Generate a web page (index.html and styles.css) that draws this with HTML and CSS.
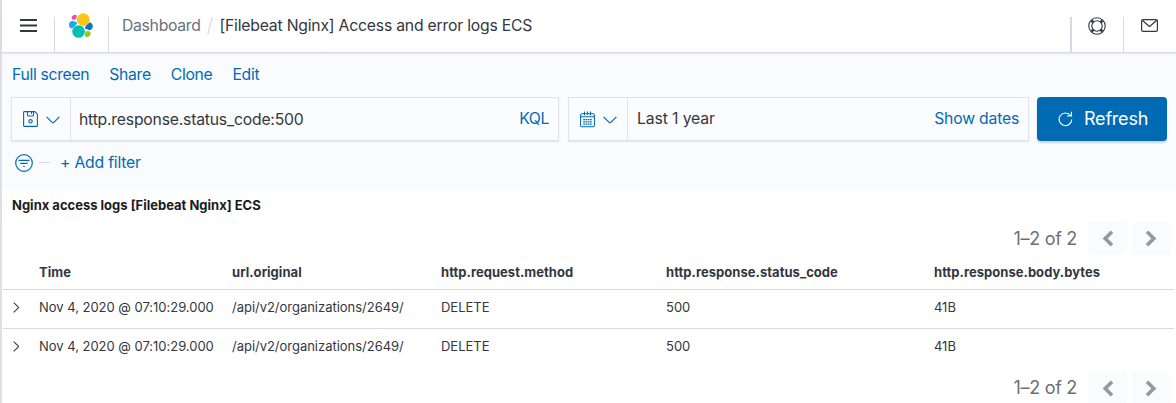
FILE: index.html
```html
<!DOCTYPE html>
<html lang="en">
<head>
<meta charset="utf-8">
<title>Dashboard</title>
<link rel="stylesheet" href="styles.css">
</head>
<body>
<div class="app">
  <header class="header">
    <button class="header-menu" aria-label="Menu"><svg width="17" height="13" viewBox="0 0 17 13"><path d="M0 1h17M0 6.500h17M0 12h17" stroke="#343741" stroke-width="2"/></svg></button>
    <a class="header-logo"><svg width="24" height="25" viewBox="0 0 32 33">
      <circle cx="19" cy="8.500" r="8.500" fill="#fec514"/>
      <circle cx="12.700" cy="24.500" r="8.400" fill="#00bfb3"/>
      <path d="M8 2.200a3.600 3.600 0 0 1 2.400 1L9.300 8.600 4.200 8.600A4.300 4.300 0 0 1 8 2.200z" fill="#f04e98"/>
      <path d="M4.500 10 11.200 12.600 9.500 15.600 3.900 20.900A5.600 5.600 0 0 1 4.500 10z" fill="#1ba9f5"/>
      <path d="M27.700 12a5.600 5.600 0 0 1-.5 10.800L20.800 20.300 22.600 16.800z" fill="#0077cc"/>
      <path d="M22 24 27.500 24.200A4.300 4.300 0 0 1 20.900 30.300z" fill="#93c90e"/>
    </svg></a>
    <nav class="breadcrumbs"><span class="crumb">Dashboard</span><svg class="slash" width="6" height="18" viewBox="0 0 6 18"><path d="M5.300 .5.700 17.500" stroke="#d3dae6" stroke-width="1.200"/></svg><span class="crumb-current">[Filebeat Nginx] Access and error logs ECS</span></nav>
    <button class="header-help" aria-label="Help"><svg width="18" height="18" viewBox="0 0 18 18" fill="none" stroke="#343741" stroke-width="1.100"><circle cx="9" cy="9" r="8.200"/><circle cx="9" cy="9" r="5.200"/><path d="M3.500 3.500 5.400 5.400M14.500 3.500 12.600 5.400M3.500 14.500 5.400 12.600M14.500 14.500 12.600 12.600" stroke-width="2.600"/></svg></button>
    <button class="header-mail" aria-label="Newsfeed"><svg width="17" height="13" viewBox="0 0 17 13" fill="none" stroke="#343741" stroke-width="1.200"><rect x=".6" y=".6" width="15.800" height="11.800" rx="1.400"/><path d="M1.200 1.200 7.800 7a1 1 0 0 0 1.400 0L15.800 1.200"/></svg></button>
  </header>
  <section class="controls">
    <nav class="menu"><a>Full screen</a><a>Share</a><a>Clone</a><a>Edit</a></nav>
    <div class="query-row">
      <div class="box query">
        <div class="box-prepend">
          <svg width="15" height="16" viewBox="0 0 15 16" fill="none" stroke="#006bb4" stroke-width="1.100"><path d="M1.200.6H11.800L14.400 3.200V14.400q0 1-1 1H1.600q-1 0-1-1V1.600q0-1 .6-1zM4.500.6V4q0 1 1 1h4q1 0 1-1V.6M8.500 1v2"/><circle cx="7.500" cy="10.300" r="1.700"/></svg>
          <svg class="caret" width="14" height="8" viewBox="0 0 14 8" fill="none" stroke="#006bb4" stroke-width="1.200"><path d="M.6.800 6.400 6.600q.6.500 1.200 0L13.400.8"/></svg>
        </div>
        <span class="query-text">http.response.status_code:500</span>
        <a class="kql">KQL</a>
      </div>
      <div class="box dates">
        <div class="box-prepend">
          <svg width="15" height="17" viewBox="0 0 16 17" fill="none" stroke="#006bb4" stroke-width="1.100"><rect x=".6" y="2.300" width="14.800" height="14" rx="1.800"/><path d="M.6 5.500h14.800M4.800 0v4M11.200 0v4M8 0v3.500"/><path d="M3.500 8.600h9M3.500 11h9M3.500 13.400h9" stroke-width="1.400" stroke-dasharray="1.800 .6"/></svg>
          <svg class="caret" width="14" height="8" viewBox="0 0 14 8" fill="none" stroke="#006bb4" stroke-width="1.200"><path d="M.6.800 6.400 6.600q.6.500 1.200 0L13.400.8"/></svg>
        </div>
        <span class="date-text">Last 1 year</span>
        <a class="show-dates">Show dates</a>
      </div>
      <button class="refresh"><svg width="15" height="16" viewBox="0 0 15 16" fill="none" stroke="#fff" stroke-width="1.100"><path d="M12.600 4.800A6.300 6.300 0 1 0 13.700 8.500M13.400.8V5H9"/></svg><span>Refresh</span></button>
    </div>
    <div class="filter-row">
      <svg width="18" height="18" viewBox="0 0 18 18" fill="none" stroke="#006bb4" stroke-width="1.200"><circle cx="9" cy="9" r="8.300"/><path d="M3.500 6.400h11M5.300 9.400h7.400M8.200 12.500h1.600"/></svg>
      <i class="dash"></i>
      <a class="add-filter">+ Add filter</a>
    </div>
  </section>
  <main class="panel">
    <h2 class="panel-title">Nginx access logs [Filebeat Nginx] ECS</h2>
    <div class="pager"><span>1–2 of 2</span><button aria-label="Previous"><svg width="12" height="17" viewBox="0 0 12 17"><path d="M10 1.800 3.200 8.500 10 15.200" fill="none" stroke="#98989c" stroke-width="3.600"/></svg></button><button aria-label="Next"><svg class="next" width="12" height="17" viewBox="0 0 12 17"><path d="M2 1.800 8.800 8.500 2 15.200" fill="none" stroke="#98989c" stroke-width="3.600"/></svg></button></div>
    <div class="table">
      <div class="row head"><span></span><span>Time</span><span>url.original</span><span>http.request.method</span><span>http.response.status_code</span><span>http.response.body.bytes</span></div>
      <div class="row"><svg class="expand" width="7" height="11" viewBox="0 0 7 11"><path d="M.7.7 5.400 5.100q.4.400 0 .8L.7 10.300" fill="none" stroke="#343741" stroke-width="1.100"/></svg><span>Nov 4, 2020 @ 07:10:29.000</span><span>/api/v2/organizations/2649/</span><span>DELETE</span><span>500</span><span>41B</span></div>
      <div class="row"><svg class="expand" width="7" height="11" viewBox="0 0 7 11"><path d="M.7.7 5.400 5.100q.4.400 0 .8L.7 10.300" fill="none" stroke="#343741" stroke-width="1.100"/></svg><span>Nov 4, 2020 @ 07:10:29.000</span><span>/api/v2/organizations/2649/</span><span>DELETE</span><span>500</span><span>41B</span></div>
    </div>
    <div class="pager pager-bottom"><span>1–2 of 2</span><button aria-label="Previous"><svg width="12" height="17" viewBox="0 0 12 17"><path d="M10 1.800 3.200 8.500 10 15.200" fill="none" stroke="#98989c" stroke-width="3.600"/></svg></button><button aria-label="Next"><svg class="next" width="12" height="17" viewBox="0 0 12 17"><path d="M2 1.800 8.800 8.500 2 15.200" fill="none" stroke="#98989c" stroke-width="3.600"/></svg></button></div>
  </main>
</div>
</body>
</html>
```
FILE: styles.css
```css
* { box-sizing: border-box; }
body { margin: 0; height: 403px; overflow: hidden; background: #fff; color: #343741; font-family: Inter, sans-serif; font-size: 15.75px; letter-spacing: -0.21px; white-space: nowrap; }
button { border: 0; padding: 0; background: none; font: inherit; letter-spacing: inherit; }
svg { display: block; flex: none; }
a { color: #006bb4; }
.app { height: 403px; border-left: 2px solid #dcdfe7; }
.header { position: relative; display: flex; height: 53px; border-bottom: 1px solid #d3dae6; box-shadow: 0 1px 2px rgba(152, 162, 179, .25); padding-top: 17px; background: #fff; }
.header-menu { width: 53px; padding: 2px 0 0 18px; border-right: 1px solid #d3dae6; display: flex; }
.header-logo { width: 54px; padding-left: 14px; border-right: 1px solid #d3dae6; }
.header-logo svg { margin-top: -4px; }
.breadcrumbs { display: flex; flex: 1; padding-left: 13px; height: 18px; line-height: 18px; }
.crumb { color: #69707d; width: 85px; letter-spacing: -0.3px; }
.slash { margin-right: 6.5px; }
.header-help { width: 54px; border-left: 2px solid #d3dae6; border-right: 1px solid #d3dae6; padding-left: 16px; display: flex; }
.header-mail { width: 52px; padding: 2px 0 0 17px; display: flex; }
.controls { height: 137px; padding: 11px 9px 0 9px; background: #fafbfd; }
.menu { display: flex; gap: 20px; height: 22px; line-height: 22px; padding-left: 1px; letter-spacing: -0.32px; }
.query-row { display: flex; height: 44px; margin-top: 11px; }
.box { display: flex; align-items: center; height: 44px; border: 1px solid #e0e3ee; background: #fbfcfd; box-shadow: 0 1px 1px rgba(152, 162, 179, .2); }
.query { width: 548px; margin-right: 9px; }
.dates { width: 461px; margin-right: 8px; }
.box-prepend { display: flex; align-items: center; align-self: stretch; width: 59px; padding-left: 11px; border-right: 1px solid #e0e3ee; }
.caret { margin-left: 8px; margin-top: 1px; }
.query-text { flex: 1; padding-left: 8px; }
.kql { padding: 0 9px 2px 0; letter-spacing: -0.4px; }
.date-text { flex: 1; padding: 0 0 2px 9px; letter-spacing: -0.12px; }
.show-dates { padding: 0 9px 2px 0; }
.refresh { display: flex; align-items: center; width: 130px; height: 44px; padding-left: 21px; gap: 11px; border-radius: 4px; background: #006bb4; color: #fff; font-size: 18px; box-shadow: 0 2px 2px rgba(54, 97, 126, .25); }
.refresh span { padding-bottom: 2px; }
.filter-row { display: flex; align-items: center; height: 22px; margin-top: 11px; padding-left: 4px; }
.dash { width: 11px; height: 1px; margin: 0 11px 1px 6px; background: #d3dae6; }
.add-filter { margin-left: -1px; padding-bottom: 2px; }
.panel-title { margin: 0; padding: 6px 0 0 10px; height: 32px; font-size: 13px; line-height: 19px; font-weight: 700; color: #1a1c21; letter-spacing: 0; }
.pager { display: flex; justify-content: flex-end; height: 33px; gap: 5px; padding-right: 5px; font-size: 18px; line-height: 33px; color: #69707d; letter-spacing: -0.3px; }
.pager span { margin-right: 6px; }
.pager button { display: flex; align-items: center; justify-content: center; width: 39px; height: 33px; border-radius: 4px; background: #fafbfd; }
.next { margin-right: 2px; }
.table { margin: 0 2px 0 1px; font-size: 13px; letter-spacing: -0.02px; }
.row { display: grid; grid-template-columns: 36px 193px 209px 225px 268px 1fr; align-items: center; height: 39px; border-top: 1px solid #d3dae6; padding-bottom: 4px; }
.row.head { height: 34px; border-top: 0; padding: 0; font-weight: 700; letter-spacing: 0.04px; }
.expand { margin: 1px 0 0 10px; }
.pager-bottom { margin-top: 5px; line-height: 31px; }
```
